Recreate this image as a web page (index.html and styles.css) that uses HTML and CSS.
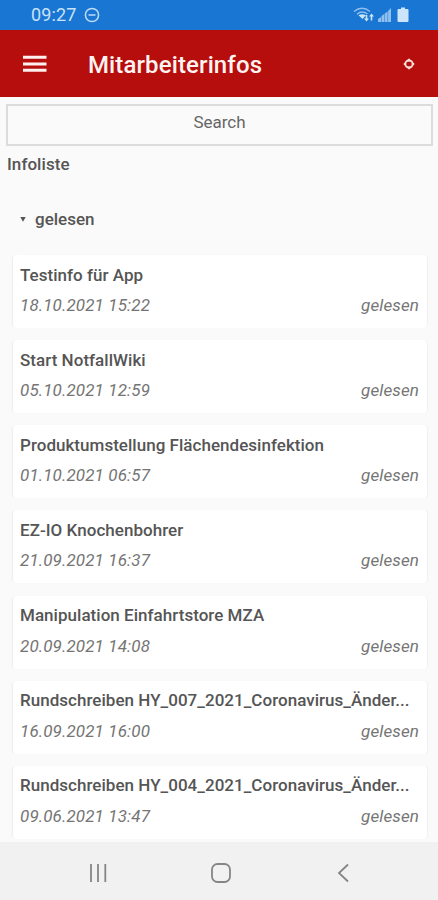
FILE: index.html
```html
<!DOCTYPE html>
<html lang="de">
<head>
<meta charset="utf-8">
<meta name="viewport" content="width=device-width, initial-scale=1">
<title>Mitarbeiterinfos</title>
<link rel="stylesheet" href="styles.css">
</head>
<body>
<div class="screen">
  <div class="status">
    <span class="clock">09:27</span>
    <svg class="dnd" width="16" height="16" viewBox="0 0 16 16"><circle cx="8" cy="8" r="6.6"/><path d="M4.500 8h7"/></svg>
    <svg class="signals" width="56" height="18" viewBox="0 0 56 18">
      <g class="wifi"><path d="M1 5.500Q9 -1 17 5.500M4 8.200Q9 4 14.500 8"/></g>
      <path class="solid" d="M5.500 9.300Q9 7 12.800 9.300L9.500 13zM12.700 9h1.600v3.500h1.700l-2.500 3-2.500-3h1.700zM17.700 14.500h1.600v-4H21l-2.500-3-2.500 3h1.700z"/>
      <path class="bars" d="M25 16v-3l3-2v5zM28.500 16v-6l2.800-2v8zM31.800 16V7.500l2.800-2V16zM35.100 16V5L38 2v14z"/>
      <path class="solid" d="M45.500 3H48V1.500h4V3h2.500q1 0 1 1v11q0 1-1 1h-9q-1 0-1-1V4q0-1 1-1z"/>
    </svg>
  </div>
  <header class="appbar">
    <svg class="menu" width="24" height="18" viewBox="0 0 24 18"><path d="M0 2.200h23.500M0 9h23.500M0 15.200h23.500"/></svg>
    <h1>Mitarbeiterinfos</h1>
    <svg class="sync" width="12" height="12" viewBox="0 0 12 12"><circle cx="6" cy="6" r="3.600"/><path class="solid" d="M3 3.500 6 .2l2.500 3.300zM9 8.500l-3 3.300-2.500-3.300zM.3 6 3 3.500v5zM11.700 6 9 3.500v5z"/></svg>
  </header>
  <main>
    <div class="search">Search</div>
    <h2>Infoliste</h2>
    <div class="group"><svg width="6" height="5" viewBox="0 0 6 5"><path d="M.3 0h5.400L3 4.700z"/></svg><span>gelesen</span></div>
    <div class="list">
      <article><h3>Testinfo für App</h3><p><span>18.10.2021 15:22</span><span>gelesen</span></p></article>
      <article><h3>Start NotfallWiki</h3><p><span>05.10.2021 12:59</span><span>gelesen</span></p></article>
      <article><h3>Produktumstellung Flächendesinfektion</h3><p><span>01.10.2021 06:57</span><span>gelesen</span></p></article>
      <article><h3>EZ-IO Knochenbohrer</h3><p><span>21.09.2021 16:37</span><span>gelesen</span></p></article>
      <article><h3>Manipulation Einfahrtstore MZA</h3><p><span>20.09.2021 14:08</span><span>gelesen</span></p></article>
      <article><h3>Rundschreiben HY_007_2021_Coronavirus_Änder...</h3><p><span>16.09.2021 16:00</span><span>gelesen</span></p></article>
      <article><h3>Rundschreiben HY_004_2021_Coronavirus_Änder...</h3><p><span>09.06.2021 13:47</span><span>gelesen</span></p></article>
    </div>
  </main>
  <nav>
    <svg width="20" height="20" viewBox="0 0 20 20"><path d="M3 1v18M10 1v18M17.300 1v18"/></svg>
    <svg width="20" height="20" viewBox="0 0 20 20"><rect x="1" y="1" width="18" height="18" rx="5.500"/></svg>
    <svg width="20" height="20" viewBox="0 0 20 20"><path d="M15 1.500 6 10l9 8.500"/></svg>
  </nav>
</div>
</body>
</html>
```

FILE: styles.css
```css
* { box-sizing: border-box; }
body { margin: 0; font-family: Roboto, sans-serif; color: #555; background: #fafafa; }
h1, h2, h3, p { margin: 0; }
svg { display: block; flex: none; fill: none; }
.screen { height: 900px; display: flex; flex-direction: column; overflow: hidden; }
.status { flex: none; height: 30px; padding: 0 29px 0 31px; display: flex; align-items: center; background: #1976d2; color: #c9e2fa; }
.clock { font-size: 18px; line-height: 30px; letter-spacing: .15px; }
.dnd { margin-left: 7px; stroke: #c0dcf8; stroke-width: 1.5; }
.signals { margin-left: auto; }
.wifi { stroke: #8fbfee; stroke-width: 1.4; }
.signals .solid { fill: #cde5fb; }
.bars { fill: #8fbfee; }
.appbar { flex: none; height: 67px; padding: 0 23px; display: flex; align-items: center; background: #b60e0c; color: #fff4f2; }
.menu { stroke: #fff0ee; stroke-width: 3; }
.appbar h1 { margin-left: 41px; font-size: 24px; line-height: 32px; font-weight: 500; letter-spacing: .12px; padding-top: 3px; }
.sync { margin-left: auto; stroke: #ffe4e0; stroke-width: 1.8; }
.sync .solid { fill: #ffe4e0; stroke: none; }
main { flex: 1; min-height: 0; overflow: hidden; padding-top: 7px; }
.search { height: 42px; margin: 0 5px 0 6px; border: 2px solid #dcdcde; text-align: center; font-size: 17px; line-height: 32px; color: #666; }
h2 { margin: 7px 0 0 7px; font-size: 17px; line-height: 22px; font-weight: 500; letter-spacing: .05px; }
.group { display: flex; align-items: center; gap: 9px; margin: 33px 0 0 20px; height: 22px; font-size: 17px; line-height: 22px; font-weight: 500; }
.group path { fill: #555; }
.list { margin: 25px 11px 0 13px; display: flex; flex-direction: column; gap: 12.15px; }
article { flex: none; height: 73px; padding: 8.5px 8px 0 7px; border-radius: 4px; background: #fff; box-shadow: -2px 0 2px -1px rgba(0,0,0,.06), 1px 0 1px rgba(0,0,0,.04); }
h3 { font-size: 17px; line-height: 22px; font-weight: 500; letter-spacing: .03px; white-space: nowrap; }
p { display: flex; justify-content: space-between; margin-top: 8.5px; font-size: 17px; line-height: 22px; font-style: italic; color: #757575; letter-spacing: .12px; }
nav { flex: none; height: 58px; padding: 3px 85px 0 88px; display: flex; align-items: center; justify-content: space-between; background: #f1f1f1; }
nav svg { stroke: #858585; stroke-width: 1.8; }
```
